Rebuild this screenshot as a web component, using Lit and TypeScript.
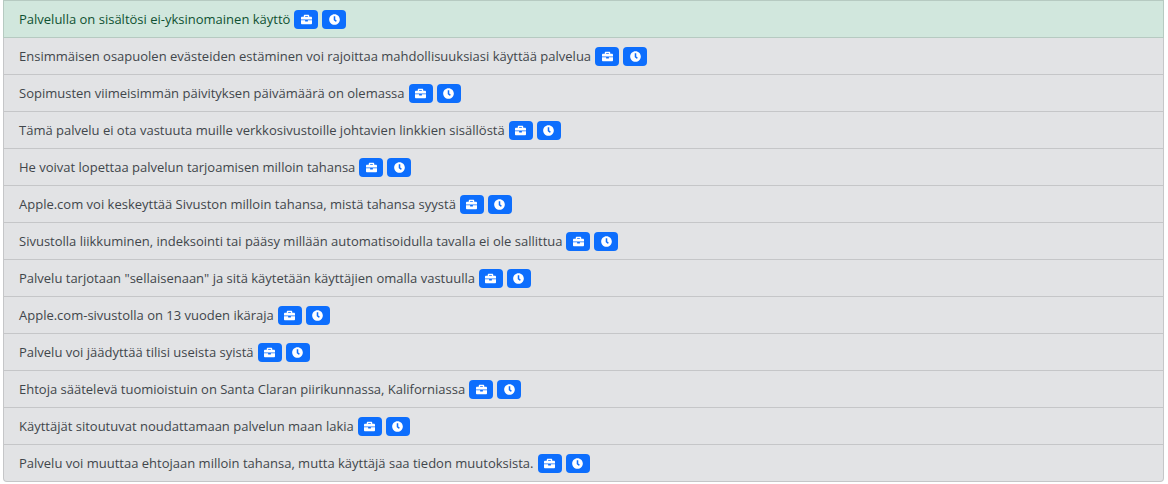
import { LitElement, html, css } from "lit";
import { customElement } from "lit/decorators.js";

interface Point {
  title: string;
  good?: boolean;
}

const points: Point[] = [
  { title: "Palvelulla on sisältösi ei-yksinomainen käyttö", good: true },
  { title: "Ensimmäisen osapuolen evästeiden estäminen voi rajoittaa mahdollisuuksiasi käyttää palvelua" },
  { title: "Sopimusten viimeisimmän päivityksen päivämäärä on olemassa" },
  { title: "Tämä palvelu ei ota vastuuta muille verkkosivustoille johtavien linkkien sisällöstä" },
  { title: "He voivat lopettaa palvelun tarjoamisen milloin tahansa" },
  { title: "Apple.com voi keskeyttää Sivuston milloin tahansa, mistä tahansa syystä" },
  { title: "Sivustolla liikkuminen, indeksointi tai pääsy millään automatisoidulla tavalla ei ole sallittua" },
  { title: 'Palvelu tarjotaan "sellaisenaan" ja sitä käytetään käyttäjien omalla vastuulla' },
  { title: "Apple.com-sivustolla on 13 vuoden ikäraja" },
  { title: "Palvelu voi jäädyttää tilisi useista syistä" },
  { title: "Ehtoja säätelevä tuomioistuin on Santa Claran piirikunnassa, Kaliforniassa" },
  { title: "Käyttäjät sitoutuvat noudattamaan palvelun maan lakia" },
  { title: "Palvelu voi muuttaa ehtojaan milloin tahansa, mutta käyttäjä saa tiedon muutoksista." },
];

const briefcase = html`<svg viewBox="0 0 512 512" aria-hidden="true"><path d="M320 336c0 8.8-7.2 16-16 16h-96c-8.800 0-16-7.200-16-16v-48H0v144c0 25.600 22.400 48 48 48h416c25.600 0 48-22.400 48-48V288H320v48zm144-208h-80V80c0-25.600-22.400-48-48-48H176c-25.600 0-48 22.400-48 48v48H48c-25.600 0-48 22.400-48 48v80h512v-80c0-25.600-22.400-48-48-48zm-144 0H192V96h128v32z"/></svg>`;

const clock = html`<svg viewBox="0 0 512 512" aria-hidden="true"><path d="M256 8C119 8 8 119 8 256s111 248 248 248 248-111 248-248S393 8 256 8zm57.100 350.100L224.900 294c-3.100-2.300-4.900-5.900-4.900-9.700V116c0-6.600 5.400-12 12-12h48c6.600 0 12 5.400 12 12v137.700l63.500 46.200c5.400 3.900 6.500 11.400 2.600 16.800l-28.200 38.800c-3.900 5.300-11.400 6.500-16.800 2.600z"/></svg>`;

@customElement("app-root")
export class AppRoot extends LitElement {
  static styles = css`
    :host {
      display: block;
      padding: 0 4px 0 3px;
      font-family: "Open Sans", "Noto Sans", sans-serif;
      font-size: 13px;
      line-height: 20px;
      color: #41464b;
    }
    .points {
      margin: 0;
      padding: 0;
      list-style: none;
    }
    .point {
      display: flex;
      align-items: center;
      gap: 4px;
      padding: 8px 15px;
      background: #e2e3e5;
      border: 1px solid rgba(0, 0, 0, 0.125);
      border-top: 0;
    }
    .point:first-child {
      border-top: 1px solid rgba(0, 0, 0, 0.125);
    }
    .point:last-child {
      border-radius: 0 0 4px 4px;
    }
    .good {
      background: #d1e7dd;
      color: #0f5132;
    }
    .tag {
      display: flex;
      align-items: center;
      justify-content: center;
      flex: none;
      width: 24px;
      height: 19px;
      padding: 0;
      border: 0;
      border-radius: 4px;
      background: #0d6efd;
      color: #fff;
    }
    svg {
      width: 11px;
      height: 11px;
      fill: currentColor;
    }
  `;

  render() {
    return html`<ul class="points">
      ${points.map(
        (p) => html`<li class="point ${p.good ? "good" : ""}">
          <span>${p.title}</span>
          <button class="tag" type="button" aria-label="Palvelu">${briefcase}</button>
          <button class="tag" type="button" aria-label="Historia">${clock}</button>
        </li>`
      )}
    </ul>`;
  }
}
